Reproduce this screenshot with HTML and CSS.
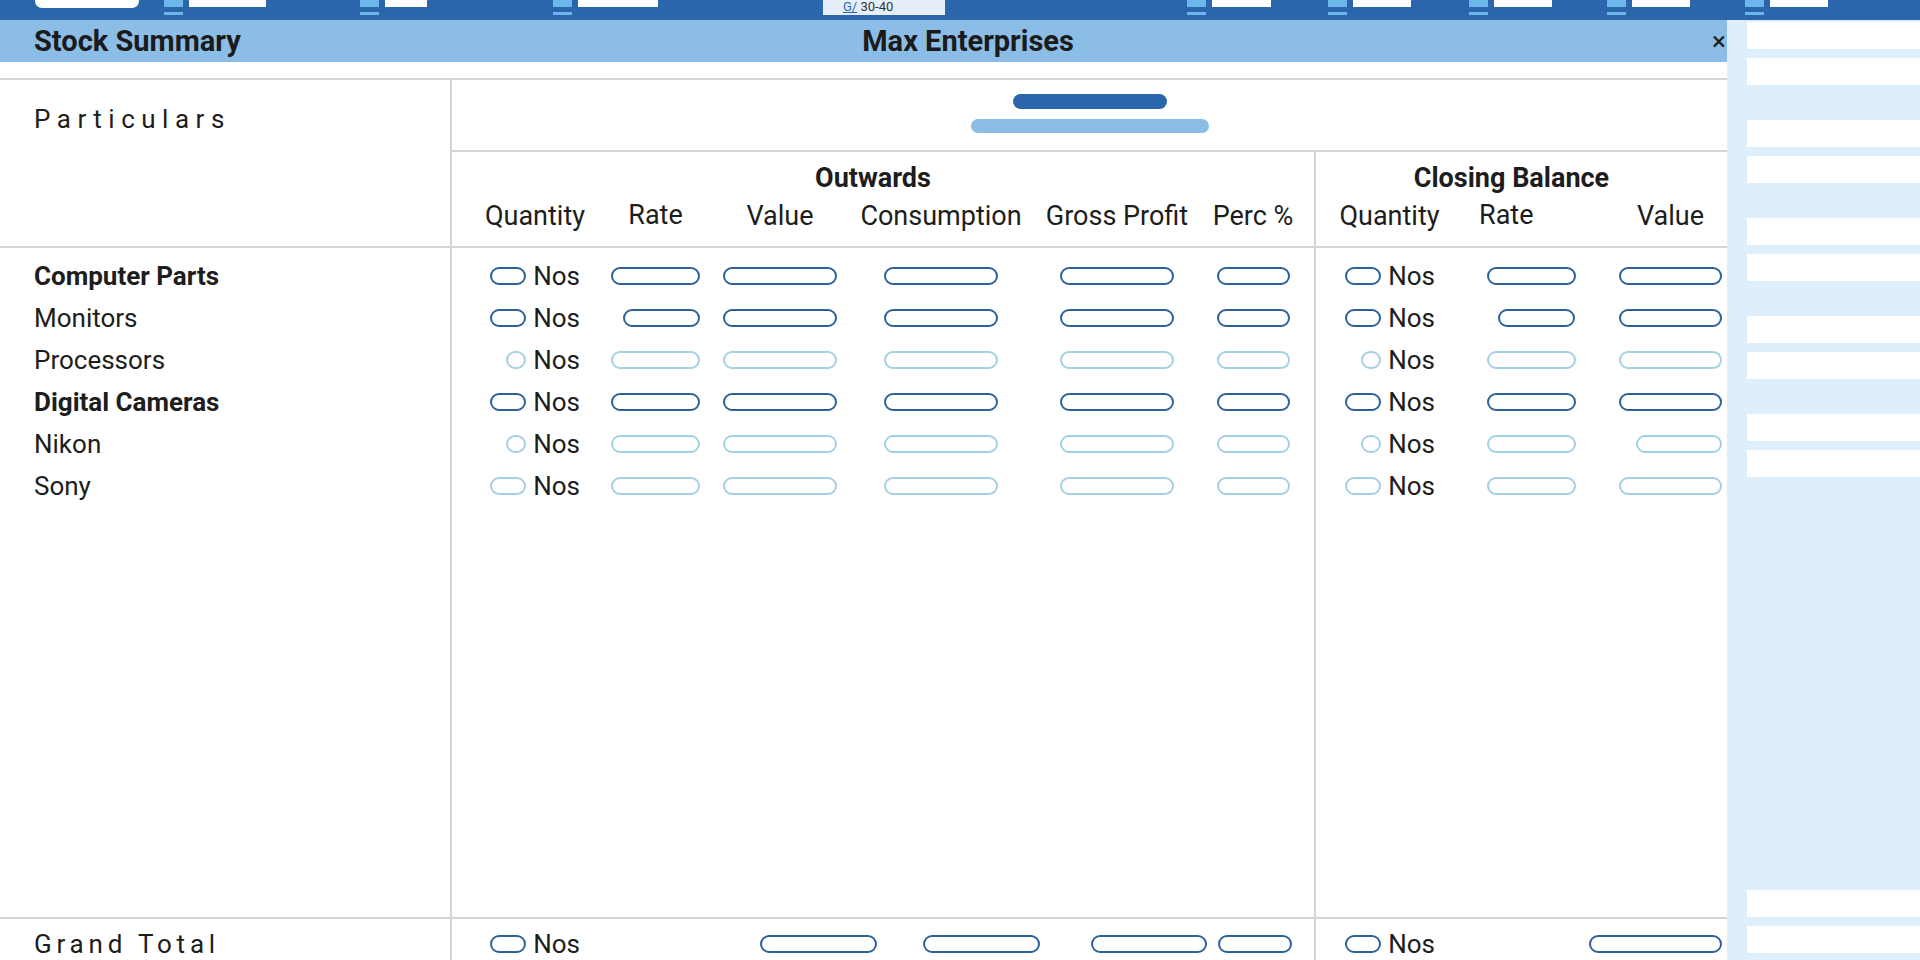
FILE: index.html
```html
<!DOCTYPE html>
<html lang="en">

<head>
    <meta charset="UTF-8">
    <title>Stock Summary</title>
    <meta name="viewport" content="width=device-width, initial-scale=1">
    <link rel="stylesheet" href="styles.css">
</head>

<body>
    <div class="app">
        <div class="topbar">
            <div class="tb-slot"><span class="tb-tab"></span></div>
            <div class="tb-slot"><span class="tb-mark"></span><span class="tb-box w77"></span></div>
            <div class="tb-slot"><span class="tb-mark"></span><span class="tb-box w42"></span></div>
            <div class="tb-slot"><span class="tb-mark"></span><span class="tb-box w80"></span></div>
            <div class="tb-slot"><span class="tb-period"><u>G/</u> 30-40</span></div>
            <div class="tb-slot"><span class="tb-mark"></span><span class="tb-box w59"></span></div>
            <div class="tb-slot"><span class="tb-mark"></span><span class="tb-box"></span></div>
            <div class="tb-slot"><span class="tb-mark"></span><span class="tb-box"></span></div>
            <div class="tb-slot"><span class="tb-mark"></span><span class="tb-box"></span></div>
            <div class="tb-slot"><span class="tb-mark"></span><span class="tb-box"></span></div>
        </div>

        <div class="main">
            <div class="report">
                <div class="titlebar">
                    <div>Stock Summary</div>
                    <div>Max Enterprises</div>
                    <div class="close">&times;</div>
                </div>

                <div class="sheet">
                    <!-- header -->
                    <div class="sheet-head">
                        <div class="name-col head-name">Particulars</div>
                        <div class="head-right">
                            <div class="head-period">
                                <div class="bar-dark"></div>
                                <div class="bar-light"></div>
                            </div>
                            <div class="head-groups">
                                <div class="out-col">
                                    <div class="group-title">Outwards</div>
                                    <div class="out-grid head-cols">
                                        <div class="col-h">Quantity</div>
                                        <div class="col-h up">Rate</div>
                                        <div class="col-h">Value</div>
                                        <div class="col-h">Consumption</div>
                                        <div class="col-h">Gross Profit</div>
                                        <div class="col-h">Perc %</div>
                                    </div>
                                </div>
                                <div class="close-col">
                                    <div class="group-title">Closing Balance</div>
                                    <div class="close-grid head-cols">
                                        <div class="col-h">Quantity</div>
                                        <div class="col-h up left">Rate</div>
                                        <div class="col-h">Value</div>
                                    </div>
                                </div>
                            </div>
                        </div>
                    </div>

                    <!-- items -->
                    <div class="sheet-body">
                        <div class="name-col">
                            <div class="row group">Computer Parts</div>
                            <div class="row">Monitors</div>
                            <div class="row">Processors</div>
                            <div class="row group">Digital Cameras</div>
                            <div class="row">Nikon</div>
                            <div class="row">Sony</div>
                        </div>

                        <div class="out-col">
                            <div class="out-grid row">
                                <div class="qty"><span class="oval"></span>Nos</div>
                                <span class="pill pill-rate"></span>
                                <span class="pill pill-val"></span>
                                <span class="pill pill-val"></span>
                                <span class="pill pill-val"></span>
                                <span class="pill pill-pct"></span>
                            </div>
                            <div class="out-grid row">
                                <div class="qty"><span class="oval"></span>Nos</div>
                                <span class="pill pill-rate short"></span>
                                <span class="pill pill-val"></span>
                                <span class="pill pill-val"></span>
                                <span class="pill pill-val"></span>
                                <span class="pill pill-pct"></span>
                            </div>
                            <div class="out-grid row light">
                                <div class="qty"><span class="oval dot"></span>Nos</div>
                                <span class="pill pill-rate"></span>
                                <span class="pill pill-val"></span>
                                <span class="pill pill-val"></span>
                                <span class="pill pill-val"></span>
                                <span class="pill pill-pct"></span>
                            </div>
                            <div class="out-grid row">
                                <div class="qty"><span class="oval"></span>Nos</div>
                                <span class="pill pill-rate"></span>
                                <span class="pill pill-val"></span>
                                <span class="pill pill-val"></span>
                                <span class="pill pill-val"></span>
                                <span class="pill pill-pct"></span>
                            </div>
                            <div class="out-grid row light">
                                <div class="qty"><span class="oval dot"></span>Nos</div>
                                <span class="pill pill-rate"></span>
                                <span class="pill pill-val"></span>
                                <span class="pill pill-val"></span>
                                <span class="pill pill-val"></span>
                                <span class="pill pill-pct"></span>
                            </div>
                            <div class="out-grid row light">
                                <div class="qty"><span class="oval"></span>Nos</div>
                                <span class="pill pill-rate"></span>
                                <span class="pill pill-val"></span>
                                <span class="pill pill-val"></span>
                                <span class="pill pill-val"></span>
                                <span class="pill pill-pct"></span>
                            </div>
                        </div>

                        <div class="close-col">
                            <div class="close-grid row">
                                <div class="qty"><span class="oval"></span>Nos</div>
                                <span class="pill pill-rate"></span>
                                <span class="pill pill-cval"></span>
                            </div>
                            <div class="close-grid row">
                                <div class="qty"><span class="oval"></span>Nos</div>
                                <span class="pill pill-rate short"></span>
                                <span class="pill pill-cval"></span>
                            </div>
                            <div class="close-grid row light">
                                <div class="qty"><span class="oval dot"></span>Nos</div>
                                <span class="pill pill-rate"></span>
                                <span class="pill pill-cval"></span>
                            </div>
                            <div class="close-grid row">
                                <div class="qty"><span class="oval"></span>Nos</div>
                                <span class="pill pill-rate"></span>
                                <span class="pill pill-cval"></span>
                            </div>
                            <div class="close-grid row light">
                                <div class="qty"><span class="oval dot"></span>Nos</div>
                                <span class="pill pill-rate"></span>
                                <span class="pill pill-cval short"></span>
                            </div>
                            <div class="close-grid row light">
                                <div class="qty"><span class="oval"></span>Nos</div>
                                <span class="pill pill-rate"></span>
                                <span class="pill pill-cval"></span>
                            </div>
                        </div>
                    </div>

                    <!-- totals -->
                    <div class="sheet-total">
                        <div class="name-col total-name">Grand Total</div>
                        <div class="out-col total-line">
                            <div class="qty"><span class="oval"></span>Nos</div>
                            <span class="pill gt-value"></span>
                            <span class="pill gt-cons"></span>
                            <span class="pill gt-gross"></span>
                            <span class="pill gt-pct"></span>
                        </div>
                        <div class="close-col total-line closing">
                            <div class="qty"><span class="oval"></span>Nos</div>
                            <span class="pill gt-cval"></span>
                        </div>
                    </div>
                </div>
            </div>

            <div class="side">
                <div class="side-pair"><div class="side-strip"></div><div class="side-strip"></div></div>
                <div class="side-pair"><div class="side-strip"></div><div class="side-strip"></div></div>
                <div class="side-pair"><div class="side-strip"></div><div class="side-strip"></div></div>
                <div class="side-pair"><div class="side-strip"></div><div class="side-strip"></div></div>
                <div class="side-pair"><div class="side-strip"></div><div class="side-strip"></div></div>
                <div class="side-pair bottom"><div class="side-strip"></div><div class="side-strip"></div></div>
            </div>
        </div>
    </div>
</body>

</html>
```

FILE: styles.css
```css
body {
    margin: 0;
    font-family: Roboto, "Noto Sans", sans-serif;
    color: #1d1d1d;
    background-color: #fff;
}

.app {
    height: 100vh;
    display: flex;
    flex-direction: column;
    overflow: hidden;
}

/* top toolbar (cut off at the top) */
.topbar {
    height: 20px;
    flex: none;
    background-color: #2b66ad;
    display: grid;
    grid-template-columns: 139px 127px 161px 231px 287px 326px 140px 141px 138px 138px;
    overflow: hidden;
}

.tb-slot {
    display: flex;
    justify-content: flex-end;
    align-items: flex-start;
    gap: 6px;
}

.tb-tab {
    width: 104px;
    height: 8px;
    background-color: #fff;
    border-radius: 0 0 7px 7px;
}

.tb-mark {
    width: 19px;
    height: 15px;
    box-sizing: border-box;
    border-top: 7px solid #6cb7ea;
    border-bottom: 3px solid #6cb7ea;
}

.tb-box {
    width: 58px;
    height: 7px;
    background-color: #fff;
}

.tb-box.w77 { width: 77px; }
.tb-box.w42 { width: 42px; }
.tb-box.w80 { width: 80px; }
.tb-box.w59 { width: 59px; }

.tb-period {
    width: 122px;
    height: 15px;
    box-sizing: border-box;
    padding-left: 20px;
    background-color: #e6eff9;
    font-size: 13px;
    line-height: 14px;
    color: #333;
}

.tb-period u {
    color: #2b66ad;
}

/* main area */
.main {
    flex: 1;
    display: flex;
    min-height: 0;
}

.report {
    flex: 1;
    min-width: 0;
    display: flex;
    flex-direction: column;
}

.titlebar {
    height: 42px;
    flex: none;
    background-color: #8bbde6;
    display: grid;
    grid-template-columns: 1.27fr auto 1fr;
    align-items: center;
    padding: 0 1px 0 34px;
    font-size: 29px;
    font-weight: 700;
    color: #1b1b1b;
}

.close {
    justify-self: end;
    font-size: 26px;
    font-weight: 400;
}

.sheet {
    flex: 1;
    min-height: 0;
    display: flex;
    flex-direction: column;
    margin-top: 16px;
    border-top: 2px solid #d4d4d4;
}

.name-col {
    width: 452px;
    flex: none;
    box-sizing: border-box;
    border-right: 2px solid #d4d4d4;
    padding-left: 34px;
}

.out-col {
    width: 864px;
    flex: none;
    box-sizing: border-box;
    border-right: 2px solid #d4d4d4;
}

.close-col {
    flex: 1;
    min-width: 0;
}

/* header */
.sheet-head {
    height: 168px;
    flex: none;
    display: flex;
    box-sizing: border-box;
    border-bottom: 2px solid #d4d4d4;
}

.head-name {
    padding-top: 24px;
    font-size: 26px;
    line-height: 30px;
    letter-spacing: 6.5px;
}

.head-right {
    flex: 1;
    display: flex;
    flex-direction: column;
}

.head-period {
    height: 72px;
    flex: none;
    box-sizing: border-box;
    border-bottom: 2px solid #d4d4d4;
    display: flex;
    flex-direction: column;
    align-items: center;
    padding-top: 14px;
    gap: 10px;
}

.bar-dark {
    width: 154px;
    height: 15px;
    border-radius: 8px;
    background-color: #2b66ad;
}

.bar-light {
    width: 238px;
    height: 14px;
    border-radius: 7px;
    background-color: #8bbde6;
}

.head-groups {
    flex: 1;
    display: flex;
}

.group-title {
    padding: 10px 20px 0 0;
    text-align: center;
    font-size: 27px;
    line-height: 32px;
    font-weight: 700;
}

.out-grid {
    display: grid;
    grid-template-columns: 106px 89px 114px 162px 144px 82px;
    column-gap: 23px;
    padding-left: 30px;
    align-items: center;
}

.close-grid {
    display: grid;
    grid-template-columns: 107px 88px 103px;
    column-gap: 44px;
    padding-left: 20px;
    align-items: center;
}

.head-cols {
    margin-top: 6px;
}

.col-h {
    justify-self: center;
    white-space: nowrap;
    font-size: 27px;
    line-height: 32px;
}

.col-h.up {
    margin-top: -3px;
}

.col-h.left {
    justify-self: start;
    margin-left: -8px;
}

/* body rows */
.sheet-body {
    flex: 1;
    min-height: 0;
    display: flex;
}

.sheet-body > div {
    padding-top: 7px;
}

.row {
    height: 42px;
    font-size: 26px;
    line-height: 42px;
}

.row.group {
    font-weight: 700;
}

.qty {
    display: flex;
    align-items: center;
    justify-content: flex-end;
    gap: 7px;
    padding-right: 8px;
    font-size: 26px;
    line-height: 32px;
}

.oval {
    width: 36px;
    height: 18px;
    box-sizing: border-box;
    border: 2px solid #2f6298;
    border-radius: 9px;
}

.oval.dot {
    width: 20px;
}

.pill {
    height: 18px;
    box-sizing: border-box;
    border: 2px solid #2f6298;
    border-radius: 9px;
    background-color: #fff;
    justify-self: center;
}

.light .pill,
.light .oval {
    border-color: #a4d0e3;
}

.pill-rate { width: 89px; }
.pill-val { width: 114px; }
.pill-pct { width: 73px; }
.pill-cval { width: 103px; }

.pill-rate.short {
    width: 77px;
    justify-self: end;
}

.pill-cval.short {
    width: 86px;
    justify-self: end;
}

/* grand total */
.sheet-total {
    height: 43px;
    flex: none;
    display: flex;
    box-sizing: border-box;
    border-top: 2px solid #d4d4d4;
}

.total-name {
    padding-top: 9px;
    font-size: 26px;
    line-height: 32px;
    letter-spacing: 4.8px;
}

.total-line {
    display: flex;
    align-items: center;
    padding-top: 9px;
    padding-left: 30px;
}

.total-line.closing {
    padding-left: 20px;
}

.total-line .qty {
    width: 106px;
    box-sizing: border-box;
}

.total-line.closing .qty {
    width: 107px;
}

.gt-value { width: 117px; margin-left: 172px; }
.gt-cons { width: 117px; margin-left: 46px; }
.gt-gross { width: 116px; margin-left: 51px; }
.gt-pct { width: 74px; margin-left: 11px; }
.gt-cval { width: 133px; margin-left: 146px; }

/* right side panel */
.side {
    width: 193px;
    flex: none;
    box-sizing: border-box;
    background-color: #deeefb;
    padding: 2px 0 7px 20px;
    display: flex;
    flex-direction: column;
}

.side-pair {
    display: flex;
    flex-direction: column;
    gap: 9px;
    margin-bottom: 35px;
}

.side-pair.bottom {
    margin-top: auto;
    margin-bottom: 0;
}

.side-strip {
    height: 27px;
    background-color: #fff;
}
```
